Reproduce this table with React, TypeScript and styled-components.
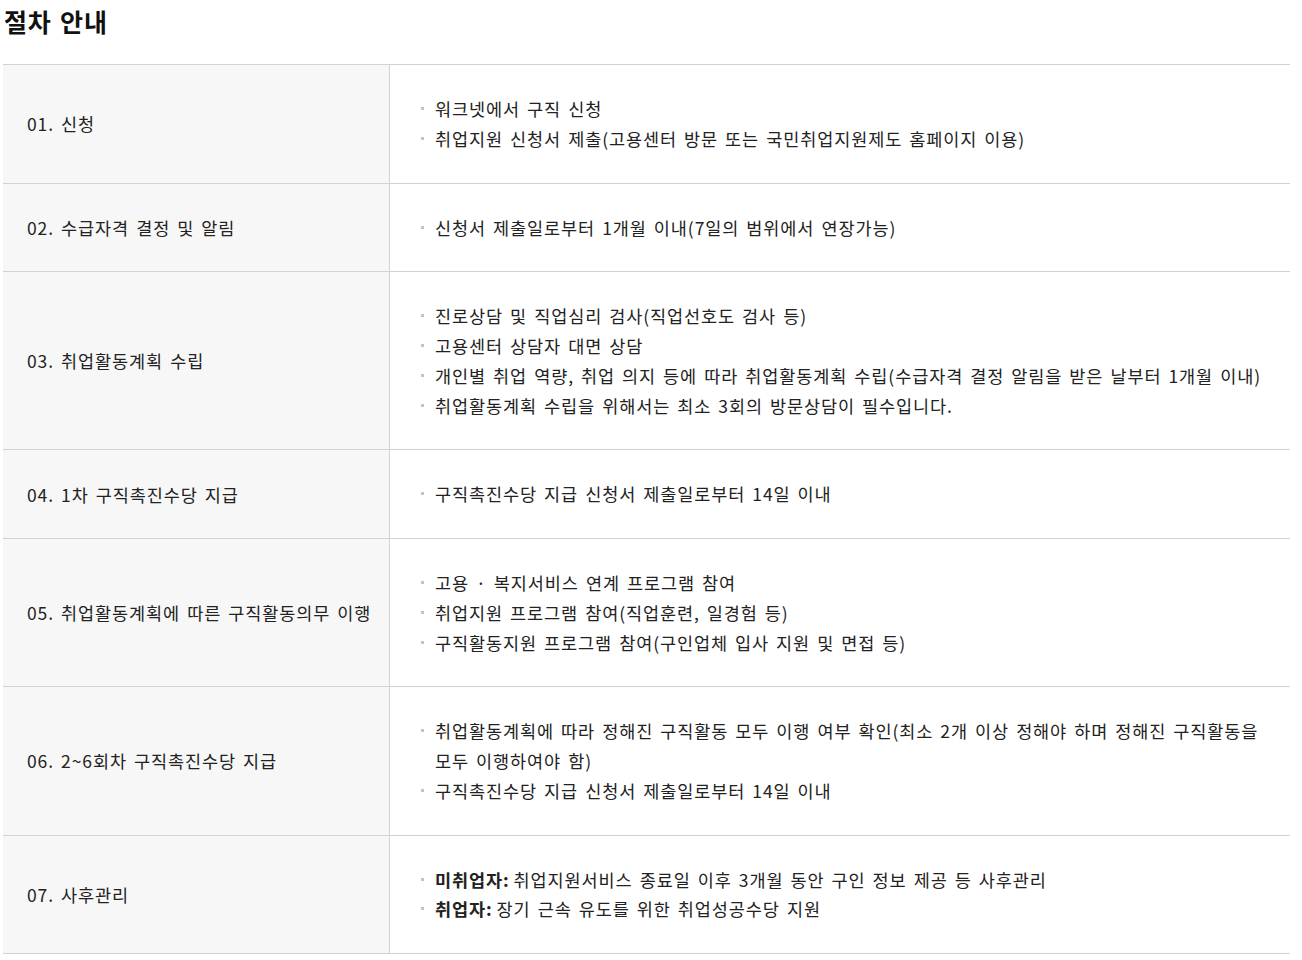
import styled, { createGlobalStyle } from "styled-components";

type Item = { label?: string; text: string };
type Step = { title: string; items: Item[] };

const steps: Step[] = [
  {
    title: "01. 신청",
    items: [
      { text: "워크넷에서 구직 신청" },
      { text: "취업지원 신청서 제출(고용센터 방문 또는 국민취업지원제도 홈페이지 이용)" },
    ],
  },
  {
    title: "02. 수급자격 결정 및 알림",
    items: [{ text: "신청서 제출일로부터 1개월 이내(7일의 범위에서 연장가능)" }],
  },
  {
    title: "03. 취업활동계획 수립",
    items: [
      { text: "진로상담 및 직업심리 검사(직업선호도 검사 등)" },
      { text: "고용센터 상담자 대면 상담" },
      {
        text: "개인별 취업 역량, 취업 의지 등에 따라 취업활동계획 수립(수급자격 결정 알림을 받은 날부터 1개월 이내)",
      },
      { text: "취업활동계획 수립을 위해서는 최소 3회의 방문상담이 필수입니다." },
    ],
  },
  {
    title: "04. 1차 구직촉진수당 지급",
    items: [{ text: "구직촉진수당 지급 신청서 제출일로부터 14일 이내" }],
  },
  {
    title: "05. 취업활동계획에 따른 구직활동의무 이행",
    items: [
      { text: "고용 · 복지서비스 연계 프로그램 참여" },
      { text: "취업지원 프로그램 참여(직업훈련, 일경험 등)" },
      { text: "구직활동지원 프로그램 참여(구인업체 입사 지원 및 면접 등)" },
    ],
  },
  {
    title: "06. 2~6회차 구직촉진수당 지급",
    items: [
      {
        text: "취업활동계획에 따라 정해진 구직활동 모두 이행 여부 확인(최소 2개 이상 정해야 하며 정해진 구직활동을 모두 이행하여야 함)",
      },
      { text: "구직촉진수당 지급 신청서 제출일로부터 14일 이내" },
    ],
  },
  {
    title: "07. 사후관리",
    items: [
      { label: "미취업자:", text: "취업지원서비스 종료일 이후 3개월 동안 구인 정보 제공 등 사후관리" },
      { label: "취업자:", text: "장기 근속 유도를 위한 취업성공수당 지원" },
    ],
  },
];

const GlobalStyle = createGlobalStyle`
  body {
    margin: 0;
    background: #ffffff;
    font-family: "Noto Sans CJK KR", "Noto Sans", sans-serif;
    color: #222222;
  }
`;

const Page = styled.div`
  padding: 0 12px 0 3px;
`;

const Title = styled.h2`
  margin: 0;
  padding: 4px 0 0 1px;
  height: 64px;
  box-sizing: border-box;
  font-size: 25px;
  line-height: 34px;
  font-weight: 700;
  color: #111111;
  letter-spacing: 0.8px;
  word-spacing: 2px;
`;

const Table = styled.table`
  width: 1287px;
  border-collapse: collapse;
  table-layout: fixed;
  border-top: 1px solid #d2d2d2;
`;

const Row = styled.tr`
  border-bottom: 1px solid #d2d2d2;
`;

const Head = styled.th`
  width: 352px;
  padding: 0 10px 0 24px;
  background: #f7f7f7;
  border-right: 1px solid #d2d2d2;
  text-align: left;
  font-size: 17.5px;
  font-weight: 400;
  color: #222222;
  letter-spacing: 0.9px;
  word-spacing: 2.25px;
`;

const Cell = styled.td`
  padding: 29px 18px 29px 30px;
  vertical-align: middle;
`;

const List = styled.ul`
  margin: 0;
  padding: 0;
  list-style: none;
`;

const Bullet = styled.li`
  position: relative;
  padding-left: 15px;
  font-size: 17.5px;
  line-height: 29.75px;
  color: #222222;
  letter-spacing: 0.9px;
  word-spacing: 2.25px;

  &::before {
    content: "";
    position: absolute;
    left: 1px;
    top: 13px;
    width: 3px;
    height: 3px;
    background: #c4c4c4;
  }
`;

const Label = styled.strong`
  font-weight: 700;
  margin-right: 4px;
`;

export default function App() {
  return (
    <Page>
      <GlobalStyle />
      <Title>절차 안내</Title>
      <Table>
        <tbody>
          {steps.map((step) => (
            <Row key={step.title}>
              <Head>{step.title}</Head>
              <Cell>
                <List>
                  {step.items.map((item) => (
                    <Bullet key={item.text}>
                      {item.label && <Label>{item.label}</Label>}
                      {item.text}
                    </Bullet>
                  ))}
                </List>
              </Cell>
            </Row>
          ))}
        </tbody>
      </Table>
    </Page>
  );
}
